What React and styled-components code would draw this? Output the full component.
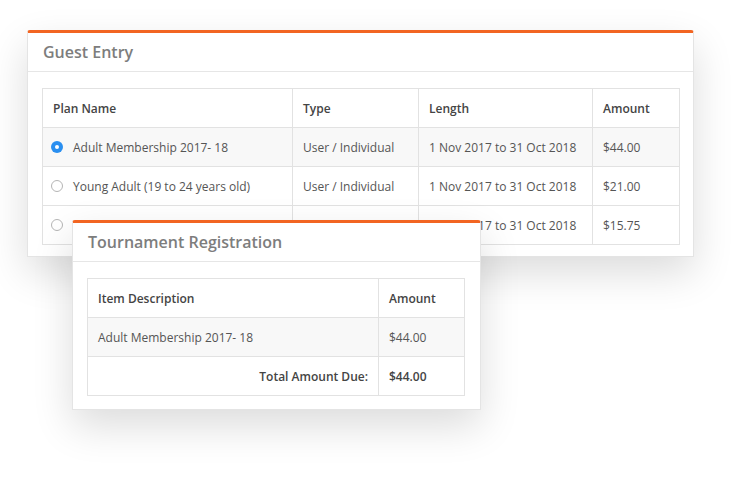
import React from "react";
import styled, { createGlobalStyle } from "styled-components";

const Global = createGlobalStyle`
  html, body { margin: 0; padding: 0; background: #fff; }
  body { font-family: "Open Sans", "Liberation Sans", sans-serif; -webkit-font-smoothing: antialiased; }
  * { box-sizing: border-box; }
`;

const Page = styled.div`
  position: relative;
  width: 744px;
  height: 480px;
  padding: 30px 0 0 27px;
  overflow: hidden;
`;

const Card = styled.section`
  width: ${(p) => p.$width}px;
  background: #fff;
  border: 1px solid #e4e4e4;
  border-top: 3px solid #f26522;
  border-radius: 3px 3px 0 0;
  box-shadow: 0 16px 40px rgba(0, 0, 0, 0.14);
`;

const Overlay = styled.div`
  position: absolute;
  left: 72px;
  top: 220px;
`;

const CardHeader = styled.header`
  height: 39px;
  display: flex;
  align-items: center;
  padding: 0 15px;
  border-bottom: 1px solid #e6e6e6;
  font-size: 16px;
  font-weight: 600;
  color: #7d7d7d;
`;

const CardBody = styled.div`
  padding: ${(p) => p.$pad};
`;

const Table = styled.table`
  width: 100%;
  border-collapse: collapse;
  table-layout: fixed;
  font-size: 12px;
  color: #555;
`;

const Th = styled.th`
  height: 39px;
  padding: 0 10px;
  text-align: left;
  font-weight: 600;
  color: #444;
  border: 1px solid #e2e2e2;
  width: ${(p) => (p.$w ? `${p.$w}px` : "auto")};
`;

const Tr = styled.tr`
  background: ${(p) => (p.$striped ? "#f8f8f8" : "#fff")};
`;

const Td = styled.td`
  height: 39px;
  padding: 0 10px;
  border: 1px solid #e2e2e2;
  white-space: nowrap;
  overflow: hidden;
  text-align: ${(p) => (p.$right ? "right" : "left")};
  font-weight: ${(p) => (p.$bold ? 600 : 400)};
  color: ${(p) => (p.$bold ? "#444" : "#555")};
`;

const PlanCell = styled.span`
  display: flex;
  align-items: center;
  gap: 10px;
  margin-left: -2px;
`;

const Radio = styled.span`
  flex: none;
  width: 12px;
  height: 12px;
  border-radius: 50%;
  border: ${(p) => (p.$checked ? "none" : "1px solid #b5b5b5")};
  background: ${(p) => (p.$checked ? "#2a8ff0" : "#fff")};
  display: flex;
  align-items: center;
  justify-content: center;
  &::after {
    content: "";
    display: ${(p) => (p.$checked ? "block" : "none")};
    width: 4px;
    height: 4px;
    border-radius: 50%;
    background: #fff;
  }
`;

const plans = [
  { name: "Adult Membership 2017- 18", type: "User / Individual", length: "1 Nov 2017 to 31 Oct 2018", amount: "$44.00", checked: true },
  { name: "Young Adult (19 to 24 years old)", type: "User / Individual", length: "1 Nov 2017 to 31 Oct 2018", amount: "$21.00" },
  { name: "", type: "", length: "1 Nov 2017 to 31 Oct 2018", amount: "$15.75" },
];

export default function App() {
  return (
    <>
      <Global />
      <Page>
        <Card $width={667}>
          <CardHeader>Guest Entry</CardHeader>
          <CardBody $pad="16px 13px 11px 14px">
            <Table>
              <thead>
                <tr>
                  <Th $w={250}>Plan Name</Th>
                  <Th $w={126}>Type</Th>
                  <Th $w={174}>Length</Th>
                  <Th>Amount</Th>
                </tr>
              </thead>
              <tbody>
                {plans.map((p, i) => (
                  <Tr key={i} $striped={i === 0}>
                    <Td>
                      <PlanCell>
                        <Radio $checked={p.checked} />
                        {p.name}
                      </PlanCell>
                    </Td>
                    <Td>{p.type}</Td>
                    <Td>{p.length}</Td>
                    <Td>{p.amount}</Td>
                  </Tr>
                ))}
              </tbody>
            </Table>
          </CardBody>
        </Card>
        <Overlay>
          <Card $width={409}>
            <CardHeader>Tournament Registration</CardHeader>
            <CardBody $pad="16px 15px 13px 14px">
              <Table>
                <thead>
                  <tr>
                    <Th $w={291}>Item Description</Th>
                    <Th>Amount</Th>
                  </tr>
                </thead>
                <tbody>
                  <Tr $striped>
                    <Td>Adult Membership 2017- 18</Td>
                    <Td>$44.00</Td>
                  </Tr>
                  <Tr>
                    <Td $right $bold>Total Amount Due:</Td>
                    <Td $bold>$44.00</Td>
                  </Tr>
                </tbody>
              </Table>
            </CardBody>
          </Card>
        </Overlay>
      </Page>
    </>
  );
}
